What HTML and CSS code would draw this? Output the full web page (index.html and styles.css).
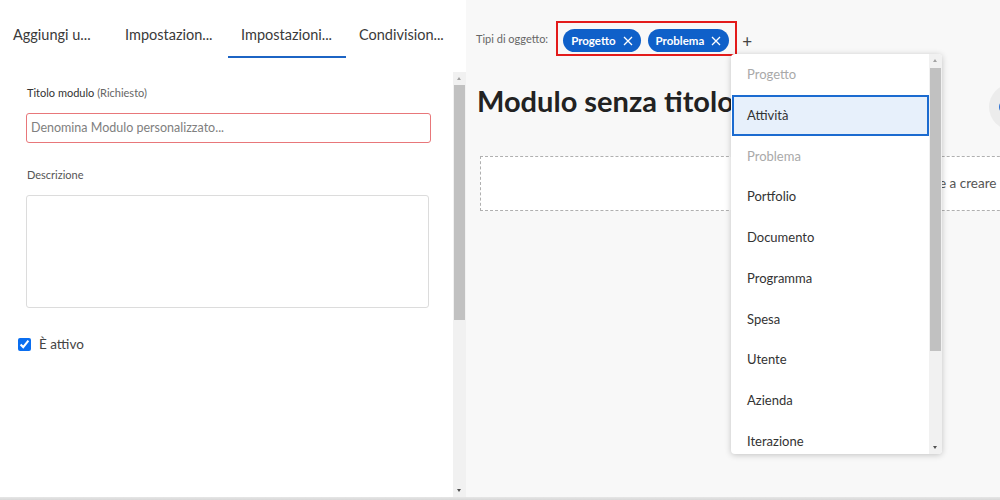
FILE: index.html
```html
<!DOCTYPE html>
<html lang="it">
<head>
<meta charset="utf-8">
<title>Modulo personalizzato</title>
<link rel="stylesheet" href="styles.css">
</head>
<body>
<div class="app">
  <aside class="left">
    <nav class="tabs">
      <div class="tab t1">Aggiungi u...</div>
      <div class="tab t2">Impostazion...</div>
      <div class="tab t3 active">Impostazioni...</div>
      <div class="tab t4">Condivision...</div>
    </nav>
    <div class="left-body">
      <div class="form">
        <div class="label">Titolo modulo <span class="muted">(Richiesto)</span></div>
        <div class="input">Denomina Modulo personalizzato...</div>
        <div class="label desc">Descrizione</div>
        <div class="textarea"></div>
        <label class="check"><input type="checkbox" checked><span>È attivo</span></label>
      </div>
      <div class="vscroll">
        <div class="arrow up"></div>
        <div class="track"><div class="thumb"></div></div>
        <div class="arrow down"></div>
      </div>
    </div>
  </aside>
  <main class="right">
    <div class="types">
      <span class="types-label">Tipi di oggetto:</span>
      <div class="chips">
        <span class="chip">Progetto <svg viewBox="0 0 10 10"><path d="M1 1L9 9M9 1L1 9"/></svg></span>
        <span class="chip">Problema <svg viewBox="0 0 10 10"><path d="M1 1L9 9M9 1L1 9"/></svg></span>
      </div>
      <span class="plus">+</span>
    </div>
    <h1 class="title">Modulo senza titolo</h1>
    <div class="dropzone"><span>e a creare il modulo</span></div>
    <div class="circle"><span class="circle-icon"></span></div>
    <div class="dropdown">
      <ul class="options">
        <li class="disabled">Progetto</li>
        <li class="selected">Attività</li>
        <li class="disabled">Problema</li>
        <li>Portfolio</li>
        <li>Documento</li>
        <li>Programma</li>
        <li>Spesa</li>
        <li>Utente</li>
        <li>Azienda</li>
        <li>Iterazione</li>
      </ul>
      <div class="vscroll dd">
        <div class="arrow up"></div>
        <div class="track"><div class="thumb"></div></div>
        <div class="arrow down"></div>
      </div>
    </div>
  </main>
</div>
<div class="bottom-bar"></div>
</body>
</html>
```
FILE: styles.css
```css
* { box-sizing: border-box; }
html, body { margin: 0; padding: 0; }
body {
  width: 1000px;
  height: 500px;
  overflow: hidden;
  font-family: Lato, "Open Sans", sans-serif;
  color: #333;
  background: #f8f8f8;
}
.app {
  display: flex;
  height: 497px;
}
.left {
  width: 466px;
  background: #fff;
  display: flex;
  flex-direction: column;
}
.tabs {
  display: flex;
  height: 72px;
  flex: none;
  align-items: flex-start;
}
.tab {
  font-size: 14.5px;
  line-height: 20px;
  padding: 25px 0 11px 13px;
  border-bottom: 2px solid transparent;
  color: #3a3a3a;
  white-space: nowrap;
}
.t1 { width: 112px; }
.t2 { width: 116px; }
.t3 { width: 118px; }
.t4 { width: 110px; }
.tab.active { border-bottom-color: #1c64c4; }
.left-body {
  flex: 1;
  display: flex;
  min-height: 0;
}
.form {
  flex: 1;
  padding: 13px 0 0 26px;
}
.label {
  font-size: 11px;
  line-height: 16px;
  padding-left: 1px;
  color: #333;
}
.muted { color: #666; }
.input {
  margin-top: 12px;
  width: 405px;
  height: 30px;
  border: 1px solid #e8777a;
  border-radius: 3px;
  font-size: 12.5px;
  line-height: 28px;
  padding-left: 4px;
  color: #808080;
}
.label.desc { margin-top: 24px; color: #555; }
.textarea {
  margin-top: 12px;
  width: 403px;
  height: 113px;
  border: 1px solid #dcdcdc;
  border-radius: 3px;
}
.check {
  display: flex;
  align-items: center;
  margin: 26px 0 0 -8px;
  font-size: 13.5px;
  line-height: 20px;
  color: #444;
}
.check input {
  margin: 1px 8px 0 0;
  width: 13px;
  height: 13px;
  accent-color: #0a6ef0;
}
.vscroll {
  width: 13px;
  background: #f1f1f1;
  display: flex;
  flex-direction: column;
}
.vscroll .track {
  flex: 1;
  padding: 0 1px;
}
.vscroll .thumb {
  background: #c1c1c1;
  height: 235px;
}
.vscroll .arrow {
  height: 13px;
  position: relative;
}
.vscroll .arrow::after {
  content: "";
  position: absolute;
  left: 4px;
  border-left: 2.5px solid transparent;
  border-right: 2.5px solid transparent;
}
.vscroll .arrow.up::after { top: 5px; border-bottom: 3px solid #a3a3a3; }
.vscroll .arrow.down::after { top: 5px; border-top: 3px solid #505050; }

.right {
  flex: 1;
  position: relative;
  background: #f8f8f8;
  overflow: hidden;
}
.types {
  display: flex;
  align-items: center;
  padding: 21px 0 0 10px;
}
.types-label {
  font-size: 11px;
  color: #666;
  margin-right: 8px;
}
.chips {
  display: flex;
  gap: 7px;
  border: 2px solid #e31b1b;
  padding: 6px 6px 2px 5px;
  height: 35px;
}
.chip {
  display: inline-flex;
  align-items: center;
  height: 23px;
  padding: 0 8px 0 8px;
  border-radius: 12px;
  background: #0f60c9;
  color: #fff;
  font-size: 11.5px;
  font-weight: 700;
}
.chip svg {
  width: 10px;
  height: 10px;
  margin-left: 7px;
  stroke: #fff;
  stroke-width: 1.3;
  fill: none;
}
.plus {
  margin-left: 5px;
  font-size: 17px;
  color: #444;
  padding-top: 6px;
}
.title {
  margin: 27px 0 0 11px;
  font-size: 29px;
  line-height: 36px;
  font-weight: 700;
  color: #222;
  white-space: nowrap;
}
.dropzone {
  margin: 37px 0 0 14px;
  width: 560px;
  height: 55px;
  border: 1px dashed #b0b0b0;
  background: #fff;
  font-size: 13.5px;
  line-height: 53px;
  color: #555;
  padding-left: 458px;
  white-space: nowrap;
}
.circle {
  position: absolute;
  left: 523px;
  top: 84px;
  width: 46px;
  height: 46px;
  border-radius: 50%;
  background: #ececec;
}
.circle-icon {
  position: absolute;
  left: 10px;
  top: 16px;
  width: 14px;
  height: 14px;
  border-radius: 50%;
  border: 2px solid #2a6fd1;
}
.dropdown {
  position: absolute;
  left: 265px;
  top: 54px;
  width: 211px;
  height: 400px;
  background: #fff;
  border-radius: 4px;
  box-shadow: 0 1px 6px rgba(0,0,0,0.22);
  display: flex;
  overflow: hidden;
}
.options {
  flex: 1;
  list-style: none;
  margin: 0;
  padding: 0;
}
.options li {
  height: 40.75px;
  line-height: 40.75px;
  padding-left: 16px;
  font-size: 13px;
  color: #333;
}
.options li.disabled { color: #a9a9a9; }
.options li.selected {
  background: #e7f0fb;
  box-shadow: inset 0 0 0 2px #1b6bd0;
  margin-left: 1px;
  padding-left: 15px;
}
.vscroll.dd .thumb { height: 283px; }
.vscroll.dd .track { padding-top: 1px; }
.bottom-bar {
  height: 3px;
  background: linear-gradient(#e6e6e6, #d8d8d8);
}
```
